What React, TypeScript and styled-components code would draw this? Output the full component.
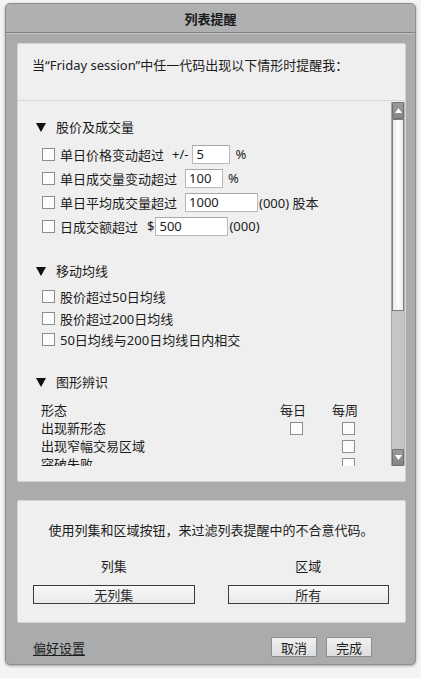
import { createGlobalStyle, styled } from 'styled-components';

const GlobalStyle = createGlobalStyle`
  html, body {
    margin: 0;
    padding: 0;
  }
  body {
    width: 421px;
    height: 678px;
    overflow: hidden;
    background: #f4f4f4;
    font-family: "Noto Sans", "Noto Sans CJK SC", sans-serif;
    font-size: 13px;
    color: #1c1c1c;
  }
`;

const Page = styled.div`
  display: flex;
  flex-direction: column;
  padding: 3px 0 0 5px;
`;

const Window = styled.div`
  box-sizing: border-box;
  width: 411px;
  height: 662px;
  display: flex;
  flex-direction: column;
  background: #a9abad;
  border: 1px solid #8c8e90;
  border-radius: 5px;
  box-shadow: 0 1px 3px rgba(0, 0, 0, 0.35);
`;

const TitleBar = styled.div`
  height: 28px;
  display: flex;
  align-items: center;
  justify-content: center;
  background: #aeb0b2;
  border-bottom: 1px solid #7f8183;
  box-shadow: 0 1px 0 #c2c4c6;
  border-radius: 4px 4px 0 0;
  font-family: "Noto Sans CJK SC", sans-serif;
  font-weight: bold;
  font-size: 13px;
  color: #1a1a1a;
`;

const Body = styled.div`
  flex: 1;
  display: flex;
  flex-direction: column;
  padding: 10px 9px 0 11px;
`;

const Panel = styled.div<{ $height: number }>`
  box-sizing: border-box;
  height: ${p => p.$height}px;
  display: flex;
  flex-direction: column;
  background: #efefef;
  border: 1px solid #d2d3d4;
  border-radius: 2px;
`;

const PanelHeader = styled.div`
  height: 57px;
  box-sizing: border-box;
  padding: 12px 0 0 14px;
  line-height: 18px;
  border-bottom: 1px solid #d6d6d6;
`;

const ScrollView = styled.div`
  height: 365px;
  display: flex;
`;

const ScrollContent = styled.div`
  flex: 1;
  overflow: hidden;
  padding-left: 17px;
`;

const SectionTitle = styled.div<{ $top: number }>`
  display: flex;
  align-items: center;
  height: 20px;
  margin-top: ${p => p.$top}px;
  line-height: 20px;
  font-size: 13px;
`;

const Triangle = styled.span`
  width: 0;
  height: 0;
  border-left: 5px solid transparent;
  border-right: 5px solid transparent;
  border-top: 9px solid #111;
  margin: 1px 10px 0 1px;
`;

const RowList = styled.div<{ $top: number }>`
  margin-top: ${p => p.$top}px;
  padding-left: 7px;
`;

const OptionRow = styled.div<{ $height: number }>`
  display: flex;
  align-items: center;
  height: ${p => p.$height}px;
  white-space: nowrap;
`;

const Box = styled.span`
  box-sizing: border-box;
  display: inline-block;
  width: 13px;
  height: 13px;
  background: #fcfcfc;
  border: 1px solid #8e8e8e;
  flex-shrink: 0;
`;

const RowLabel = styled.span`
  margin-left: 5px;
`;

const Unit = styled.span<{ $gap: number }>`
  margin-left: ${p => p.$gap}px;
`;

const NumberBox = styled.span<{ $width: number; $gap: number }>`
  box-sizing: border-box;
  display: inline-flex;
  align-items: center;
  width: ${p => p.$width}px;
  height: 19px;
  margin-left: ${p => p.$gap}px;
  padding-left: 3px;
  background: #ffffff;
  border: 1px solid #b9b9b9;
  border-top-color: #a8a8a8;
  font-size: 13px;
`;

const PatternTable = styled.div`
  display: grid;
  grid-template-columns: 229px 52px 52px;
  grid-auto-rows: 18px;
  margin-top: 9px;
  padding-left: 6px;
  line-height: 18px;
`;

const ColHead = styled.span`
  text-align: center;
  padding-right: 6px;
`;

const Cell = styled.span`
  display: flex;
  align-items: center;
  justify-content: center;
`;

const Scrollbar = styled.div`
  width: 12px;
  margin-top: 1px;
  display: flex;
  flex-direction: column;
  background: #c3c5c7;
  border-left: 1px solid #a3a5a7;
  border-right: 1px solid #b5b7b9;
`;

const ArrowButton = styled.div`
  box-sizing: border-box;
  height: 17px;
  display: flex;
  align-items: center;
  justify-content: center;
  background: linear-gradient(#9a9c9e, #838587);
  border: 1px solid #6d6f71;
  border-radius: 1px;
`;

const Thumb = styled.div`
  box-sizing: border-box;
  height: 192px;
  background: linear-gradient(90deg, #e9e9e9, #fbfbfb 50%, #ececec);
  border: 1px solid #7c7e80;
`;

const Track = styled.div`
  flex: 1;
`;

const BottomPanel = styled(Panel)`
  margin-top: 18px;
  padding: 20px 16px 0 15px;
  align-items: stretch;
`;

const Hint = styled.div`
  text-align: center;
  line-height: 18px;
`;

const FilterGrid = styled.div`
  display: grid;
  grid-template-columns: 1fr 1fr;
  column-gap: 33px;
  margin-top: 18px;
`;

const FilterColumn = styled.div`
  display: flex;
  flex-direction: column;
  align-items: stretch;
`;

const FilterLabel = styled.div`
  text-align: center;
  line-height: 18px;
  margin-bottom: 10px;
`;

const FilterButton = styled.div`
  box-sizing: border-box;
  height: 19px;
  display: flex;
  align-items: center;
  justify-content: center;
  background: linear-gradient(#f8f8f8, #e9e9e9);
  border: 1px solid #3c3c3c;
  font-size: 13px;
  color: #2a2a2a;
`;

const Footer = styled.div`
  display: flex;
  align-items: center;
  padding: 14px 34px 0 16px;
`;

const PrefLink = styled.span`
  text-decoration: underline;
  text-underline-offset: 2px;
  color: #1e1e1e;
  flex: 1;
`;

const FooterButton = styled.div`
  box-sizing: border-box;
  width: 46px;
  height: 20px;
  display: flex;
  align-items: center;
  justify-content: center;
  margin-left: 9px;
  background: linear-gradient(#f1f1f1, #dedede);
  border: 1px solid #8a8c8e;
  border-radius: 1px;
`;

const UnderStrip = styled.div`
  flex: 1;
  height: 13px;
  margin-left: -5px;
  display: grid;
  grid-template-columns: 83px 149px 1fr;
  background: #f7f7f7;
`;

const StripCell = styled.div`
  border-left: 1px solid #9a9a9a;
  &:first-child {
    border-left: none;
  }
`;

const priceRows = [
  { label: '单日价格变动超过', pre: '+/-', value: '5', width: 38, unit: '%' },
  { label: '单日成交量变动超过', value: '100', width: 38, unit: '%' },
  { label: '单日平均成交量超过', value: '1000', width: 73, unit: '(000) 股本' },
  { label: '日成交额超过', pre: '$', value: '500', width: 73, unit: '(000)' },
];

const maRows = ['股价超过50日均线', '股价超过200日均线', '50日均线与200日均线日内相交'];

const patterns = [
  { label: '出现新形态', daily: true, weekly: true },
  { label: '出现窄幅交易区域', daily: false, weekly: true },
  { label: '突破失败', daily: false, weekly: true },
];

const ArrowIcon = ({ down }: { down?: boolean }) => (
  <svg width="7" height="5" viewBox="0 0 7 5">
    <path d={down ? 'M0 0 H7 L3.5 5 Z' : 'M0 5 H7 L3.5 0 Z'} fill="#fff" />
  </svg>
);

const App = () => {
  return (
    <Page>
      <GlobalStyle />
      <Window>
        <TitleBar>列表提醒</TitleBar>
        <Body>
          <Panel $height={439}>
            <PanelHeader>当“Friday session”中任一代码出现以下情形时提醒我：</PanelHeader>
            <ScrollView>
              <ScrollContent>
                <SectionTitle $top={16}>
                  <Triangle />
                  股价及成交量
                </SectionTitle>
                <RowList $top={5}>
                  {priceRows.map(row => (
                    <OptionRow $height={24} key={row.label}>
                      <Box />
                      <RowLabel>{row.label}</RowLabel>
                      {row.pre === '+/-' && <Unit $gap={8}>+/-</Unit>}
                      {row.pre === '$' && <Unit $gap={9}>$</Unit>}
                      <NumberBox $width={row.width} $gap={row.pre === '+/-' ? 4 : row.pre ? 1 : 8}>
                        {row.value}
                      </NumberBox>
                      <Unit $gap={row.unit === '%' ? 5 : 1}>{row.unit}</Unit>
                    </OptionRow>
                  ))}
                </RowList>

                <SectionTitle $top={23}>
                  <Triangle />
                  移动均线
                </SectionTitle>
                <RowList $top={5}>
                  {maRows.map(label => (
                    <OptionRow $height={21.5} key={label}>
                      <Box />
                      <RowLabel>{label}</RowLabel>
                    </OptionRow>
                  ))}
                </RowList>

                <SectionTitle $top={21.5}>
                  <Triangle />
                  图形辨识
                </SectionTitle>
                <PatternTable>
                  <span>形态</span>
                  <ColHead>每日</ColHead>
                  <ColHead>每周</ColHead>
                  {patterns.map(p => (
                    <>
                      <span key={p.label}>{p.label}</span>
                      <Cell>{p.daily && <Box />}</Cell>
                      <Cell>{p.weekly && <Box />}</Cell>
                    </>
                  ))}
                </PatternTable>
              </ScrollContent>
              <Scrollbar>
                <ArrowButton>
                  <ArrowIcon />
                </ArrowButton>
                <Thumb />
                <Track />
                <ArrowButton>
                  <ArrowIcon down />
                </ArrowButton>
              </Scrollbar>
            </ScrollView>
          </Panel>

          <BottomPanel $height={123}>
            <Hint>使用列集和区域按钮，来过滤列表提醒中的不合意代码。</Hint>
            <FilterGrid>
              <FilterColumn>
                <FilterLabel>列集</FilterLabel>
                <FilterButton>无列集</FilterButton>
              </FilterColumn>
              <FilterColumn>
                <FilterLabel>区域</FilterLabel>
                <FilterButton>所有</FilterButton>
              </FilterColumn>
            </FilterGrid>
          </BottomPanel>

          <Footer>
            <PrefLink>偏好设置</PrefLink>
            <FooterButton>取消</FooterButton>
            <FooterButton>完成</FooterButton>
          </Footer>
        </Body>
      </Window>
      <UnderStrip>
        <StripCell />
        <StripCell />
        <StripCell />
      </UnderStrip>
    </Page>
  );
};

export default App;
